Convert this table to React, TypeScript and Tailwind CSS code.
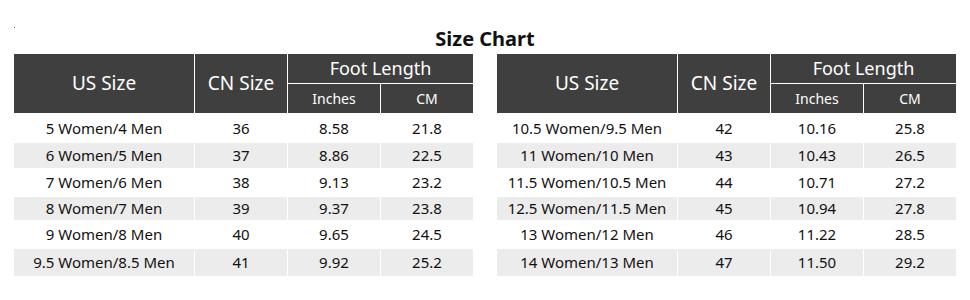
import React from "react";

const left = [
  ["5 Women/4 Men", "36", "8.58", "21.8"],
  ["6 Women/5 Men", "37", "8.86", "22.5"],
  ["7 Women/6 Men", "38", "9.13", "23.2"],
  ["8 Women/7 Men", "39", "9.37", "23.8"],
  ["9 Women/8 Men", "40", "9.65", "24.5"],
  ["9.5 Women/8.5 Men", "41", "9.92", "25.2"],
];
const right = [
  ["10.5 Women/9.5 Men", "42", "10.16", "25.8"],
  ["11 Women/10 Men", "43", "10.43", "26.5"],
  ["11.5 Women/10.5 Men", "44", "10.71", "27.2"],
  ["12.5 Women/11.5 Men", "45", "10.94", "27.8"],
  ["13 Women/12 Men", "46", "11.22", "28.5"],
  ["14 Women/13 Men", "47", "11.50", "29.2"],
];
const heights = ["h-[30px]", "h-[25px]", "h-[29px]", "h-[23px]", "h-[29px]", "h-[27px]"];

function Table({ rows }: { rows: string[][] }) {
  return (
    <div className="w-[459px] flex flex-col">
      <div className="grid grid-cols-[180px_92px_185px] gap-x-px h-[59px] text-white">
        <div className="bg-[#3f3f3f] flex items-center justify-center text-[19px]">US Size</div>
        <div className="bg-[#3f3f3f] flex items-center justify-center text-[19px]">CN Size</div>
        <div className="flex flex-col gap-y-px">
          <div className="bg-[#3f3f3f] h-[29px] flex items-center justify-center text-[18px]">Foot Length</div>
          <div className="grid grid-cols-[92px_92px] gap-x-px h-[29px]">
            <div className="bg-[#3f3f3f] flex items-center justify-center text-[14px]">Inches</div>
            <div className="bg-[#3f3f3f] flex items-center justify-center text-[14px]">CM</div>
          </div>
        </div>
      </div>
      {rows.map((r, i) => {
        const bg = i % 2 === 1 ? "bg-[#ececec]" : "bg-white";
        return (
          <div key={i} className={`grid grid-cols-[180px_92px_92px_92px] gap-x-px ${heights[i]} text-[15px] text-[#111111]`}>
            {r.map((c, j) => (
              <div key={j} className={`${bg} flex items-center justify-center`}>{c}</div>
            ))}
          </div>
        );
      })}
    </div>
  );
}

export default function App() {
  return (
    <div className="w-[970px] h-[300px] bg-white relative" style={{ fontFamily: '"Noto Sans", sans-serif' }}>
      <div className="absolute left-[14px] top-[27px] w-px h-px bg-[#00a000]" />
      <div className="pt-[27px] h-[54px] flex justify-center">
        <div className="text-[20px] font-bold leading-[24px] text-[#111111]">Size Chart</div>
      </div>
      <div className="flex gap-[24px] px-[14px]">
        <Table rows={left} />
        <Table rows={right} />
      </div>
    </div>
  );
}
